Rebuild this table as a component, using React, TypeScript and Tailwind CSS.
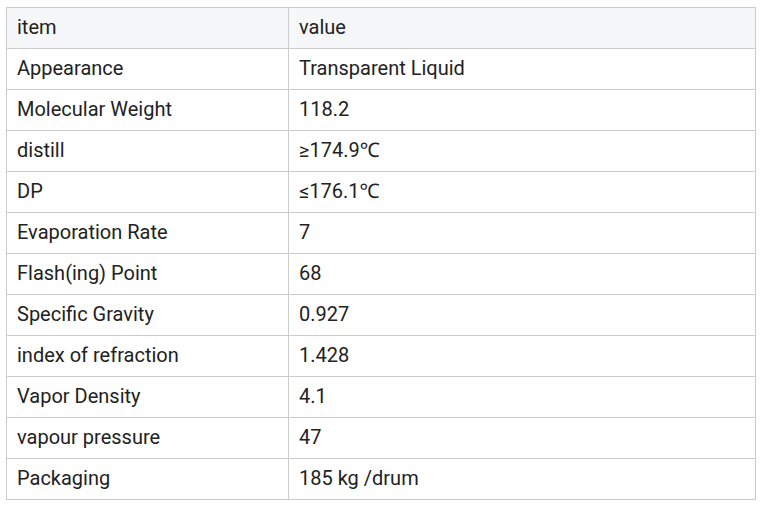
const rows: [string, string][] = [
  ["Appearance", "Transparent Liquid"],
  ["Molecular Weight", "118.2"],
  ["distill", "≥174.9℃"],
  ["DP", "≤176.1℃"],
  ["Evaporation Rate", "7"],
  ["Flash(ing) Point", "68"],
  ["Specific Gravity", "0.927"],
  ["index of refraction", "1.428"],
  ["Vapor Density", "4.1"],
  ["vapour pressure", "47"],
  ["Packaging", "185 kg /drum"],
];

export default function App() {
  return (
    <div className="w-[764px] h-[506px] bg-white pt-[7px] pl-[6px]" style={{ fontFamily: "Roboto, 'Noto Sans', sans-serif" }}>
      <table className="w-[750px] border-collapse text-[20px] leading-[24px] text-[#222] table-fixed">
        <colgroup>
          <col className="w-[282px]" />
          <col />
        </colgroup>
        <thead>
          <tr className="bg-[#f6f7f9] h-[41px]">
            <th className="border border-[#ccc] px-[10px] pb-[2px] text-left font-normal">item</th>
            <th className="border border-[#ccc] px-[10px] pb-[2px] text-left font-normal">value</th>
          </tr>
        </thead>
        <tbody>
          {rows.map(([k, v]) => (
            <tr key={k} className="h-[41px]">
              <td className="border border-[#ccc] px-[10px] pb-[2px]">{k}</td>
              <td className="border border-[#ccc] px-[10px] pb-[2px]">{v}</td>
            </tr>
          ))}
        </tbody>
      </table>
    </div>
  );
}
